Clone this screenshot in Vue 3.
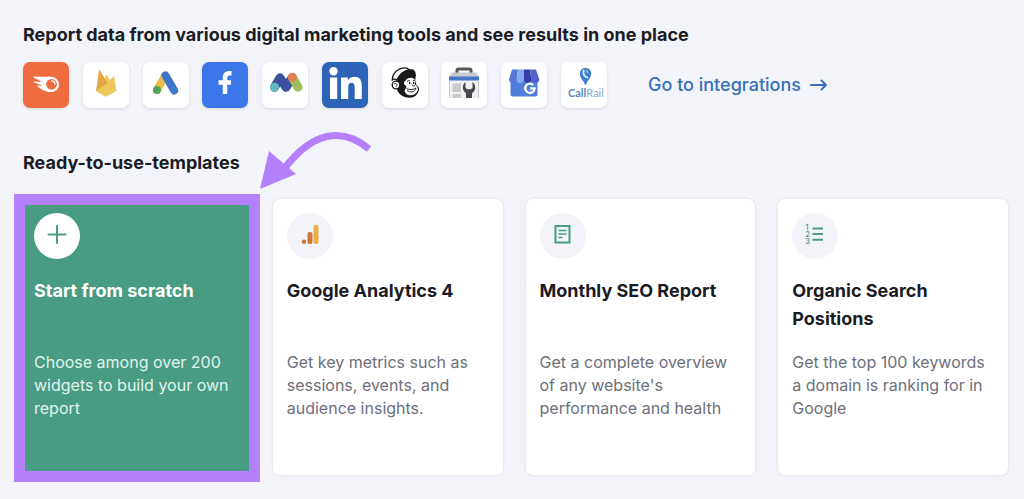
<script setup>
const templates = [
  { id: 'scratch', title: 'Start from scratch', text: 'Choose among over 200 widgets to build your own report' },
  { id: 'analytics', title: 'Google Analytics 4', text: 'Get key metrics such as sessions, events, and audience insights.' },
  { id: 'seo', title: 'Monthly SEO Report', text: "Get a complete overview of any website's performance and health" },
  { id: 'positions', title: 'Organic Search Positions', text: 'Get the top 100 keywords a domain is ranking for in Google' },
]
</script>

<template>
  <main class="page">
    <section class="integrations">
      <h2>Report data from various digital marketing tools and see results in one place</h2>
      <div class="tools">
        <ul class="tiles">
          <li class="tile semrush">
            <svg viewBox="0 0 46 46" role="img" aria-label="Semrush">
              <path fill="#fff" d="M11 14.500c5 .2 9 .4 13 .2 7-.8 12 3 12 7.700 0 4.500-3.600 7.600-8.200 7.600-5.600 0-9-2.600-13-5.300-.8-.5-.4-1.200.4-1.100l4.500.5c-2.600-1.400-5.600-2.800-8.700-3.500-.9-.3-.6-1.200.2-1.200 2.800 0 5 .3 7.500.8-2-1.800-4.700-3.100-7.700-4.200-.9-.4-.9-1.500 0-1.500z" />
              <circle cx="28.500" cy="22.300" r="5.400" fill="#ee6c3f" />
              <path fill="none" stroke="#fff" stroke-width="1.200" stroke-linecap="round" d="M28.500 18.800a3.500 3.500 0 0 1 3.500 3.500" />
            </svg>
          </li>
          <li class="tile">
            <svg viewBox="0 0 46 46" role="img" aria-label="Firebase">
              <path fill="#e9a84a" d="M13 29 16 8.500q.5-1 1.200 0l4 7.300L13 29z" />
              <path fill="#d9893e" d="m13 29 6.500-15.500 4.800 7.600z" />
              <path fill="#efc85d" d="m13 29 10-15.600q.6-.8 1.100.1L27 18l3.300-3.500q.7-.5.9.4L33.500 29 23.500 34.200q-1 .4-2 0z" />
              <path fill="#e3a447" d="m13 29 11.300-8-4.800-7.500z" />
            </svg>
          </li>
          <li class="tile">
            <svg viewBox="0 0 46 46" role="img" aria-label="Google Ads" fill="none" stroke-width="8" stroke-linecap="round">
              <path stroke="#edbd4b" d="m22 14-8 14" />
              <path stroke="#3f78ca" d="m22.500 13.500 8.700 15" />
              <circle cx="14" cy="28" r="4" fill="#4fa557" />
            </svg>
          </li>
          <li class="tile facebook">
            <svg viewBox="0 0 46 46" role="img" aria-label="Facebook">
              <path fill="none" stroke="#fff" stroke-width="4.500" d="M29.500 11.200h-2.300q-4.200 0-4.200 4.500V32M16.500 20.500H29" />
            </svg>
          </li>
          <li class="tile">
            <svg viewBox="0 0 46 46" role="img" aria-label="Matomo" fill="none" stroke-width="9" stroke-linecap="round" stroke-linejoin="round">
              <path stroke="#3d529f" d="m12.500 25.300 5.500-9.500 6 9.500 6-9.500" />
              <path stroke="#9fbe59" d="m30.500 15.500 5.500 9.700" />
              <circle cx="12.500" cy="25.300" r="4.500" fill="#62b9be" stroke="none" />
              <circle cx="30.300" cy="15.300" r="4.500" fill="#e28254" stroke="none" />
            </svg>
          </li>
          <li class="tile linkedin">
            <svg viewBox="0 0 46 46" role="img" aria-label="LinkedIn" fill="#fff">
              <circle cx="11.500" cy="9.300" r="4.200" />
              <path d="M8 15.500h7.200V37H8zM19 15.500h6.800v3c1.500-2.500 3.700-3.700 6.700-3.700 5.800 0 7.300 3.800 7.300 9.200v13h-7.100V25.800c0-3-.5-5-3-5-2.700 0-3.500 2-3.500 4.900V37H19z" />
            </svg>
          </li>
          <li class="tile">
            <svg viewBox="0 0 46 46" role="img" aria-label="Mailchimp">
              <path fill="#17181a" d="M14.500 20 17 14l14-2q3.500 0 2.500 3l-.2 4 1.300 4.500q3 1.500 2.400 4.500-1.800 7.500-9.700 7.700Q19 35.500 15.500 29z" />
              <path fill="#fff" stroke="#17181a" stroke-width="1.300" d="M10.300 18C10.500 10.500 17 4.800 25 6.200l3 2.200c-6.300-.1-10.400 3.800-13.300 9.700-1.400-1.200-2.800-1.200-4.400-.1z" />
              <path fill="#17181a" d="M16.500 18C17.500 11.500 23 6.500 30 7.300c3.300.6 4 3.800 3.800 7.200-6-2.300-12.500-.8-17.300 3.500z" />
              <path fill="#fff" d="M24 18c2.500-2.700 5.800-2.900 8.600-.8l.4 5.300c2 1.500 3.400 3.200 2.800 5.800-1.200 3.400-4.700 5.400-8.200 4.900-3.700-.6-6-3.400-4.300-6.300 1.700-1.300 1.400-2.800-.4-3.800-1.800-1.200-.8-3.500 1.100-5.100z" />
              <circle cx="14" cy="23" r="3.800" fill="#fff" stroke="#17181a" stroke-width="1.300" />
              <path fill="none" stroke="#17181a" stroke-width=".9" d="M12 22c2-1.700 3.800.3 2.400 2.600M25 19.500q1.600-1.300 3-.6M30.800 18.500h1.700M30 23l1.700 1 1.300-.5M24.500 26.500c2.500 1.500 7 1.500 9.500-.5-1 4.500-6.200 5-9 2.300" />
              <path fill="#17181a" d="M27 20h1.300v2H27zM31 20h1.200v2H31z" />
            </svg>
          </li>
          <li class="tile">
            <svg viewBox="0 0 46 46" role="img" aria-label="Google Search Console">
              <path fill="none" stroke="#555" stroke-width="3" d="M16 11V8.500q0-1.500 1.500-1.500h11q1.500 0 1.500 1.500V11" />
              <path fill="#c9cacd" d="M11 10.500h24l3 4.500H8z" />
              <path fill="#f0f0f2" d="M8 18h30v18H8z" />
              <path fill="#4777ca" d="M8 14.500h30v4H8z" />
              <path fill="#c8c9cb" d="M11.500 21.500h8.500V30h-8.500zM11.500 32h8.500v4h-8.500zM8 18.500h1V36H8zM37 18.500h1V36h-1z" />
              <path fill="#46484c" d="M24.500 20a6.800 6.800 0 0 0 .5 11.200V36h6v-4.800A6.800 6.800 0 0 0 31.500 20v5.700l-1.700 1.600h-3.600l-1.700-1.600z" />
            </svg>
          </li>
          <li class="tile">
            <svg viewBox="0 0 46 46" role="img" aria-label="Google My Business">
              <path fill="#4f7edb" d="M9.500 16h27v16.500q0 2-2 2h-23q-2 0-2-2z" />
              <path fill="#5577d5" d="M11 7.500h6l-1.500 10q-.5 3.500-3.700 3.500T8 17.500z" />
              <path fill="#85aaf0" d="M17 7.500h6v10q-.5 3.500-3.800 3.500t-3.700-3.500z" />
              <path fill="#343da7" d="M23 7.500h6l1.500 10q-.5 3.500-3.700 3.500T23 17.500z" />
              <path fill="#5262ca" d="M29 7.500h6l3.300 10q-.4 3.500-3.900 3.500t-3.900-3.500z" />
              <path fill="none" stroke="#fff" stroke-width="2.300" d="M32.200 22.900a4.700 4.700 0 1 0 1.400 3.600h-4.500" />
            </svg>
          </li>
          <li class="tile">
            <svg viewBox="0 0 46 46" role="img" aria-label="CallRail">
              <path fill="#3d7fcb" d="M24.500 5.800a5.700 5.700 0 0 0-5.700 5.700c0 4.400 3.600 6.900 5.700 11.900 2.100-5 5.700-7.500 5.700-11.900a5.700 5.700 0 0 0-5.700-5.700z" />
              <path fill="none" stroke="#e5f5ff" stroke-width="1.800" stroke-linecap="round" d="M22.800 8.500c-1 3.800.6 6.200 3.700 7" />
              <path fill="none" stroke="#e5f5ff" stroke-width="1" d="M25 8.500q2 .7 2 2.700" />
              <text x="7" y="35" class="logo-text"><tspan class="logo-bold">Call</tspan>Rail</text>
            </svg>
          </li>
        </ul>
        <a class="more" href="#integrations">
          Go to integrations
          <svg viewBox="0 0 18 16" aria-hidden="true"><path d="M1 8h15M11.500 3.500 16 8l-4.500 4.500" /></svg>
        </a>
      </div>
    </section>

    <section class="templates">
      <h2>Ready-to-use-templates</h2>
      <div class="cards">
        <a v-for="t in templates" :key="t.id" :class="['card', t.id]" :href="'#' + t.id">
          <span class="badge">
            <svg v-if="t.id === 'scratch'" viewBox="0 0 46 46" aria-hidden="true">
              <path fill="none" stroke="#489c83" stroke-width="2" stroke-linecap="round" d="M23 13v17M14.500 21.500h17" />
            </svg>
            <svg v-else-if="t.id === 'analytics'" viewBox="0 0 46 46" aria-hidden="true">
              <rect x="26.500" y="12" width="5" height="19" rx="2" fill="#e8b045" />
              <rect x="20.500" y="19" width="5" height="12" rx="2" fill="#cb7a39" />
              <circle cx="17" cy="28.700" r="2.300" fill="#cb7a39" />
            </svg>
            <svg v-else-if="t.id === 'seo'" viewBox="0 0 46 46" aria-hidden="true" fill="none" stroke="#489c83">
              <path stroke-width="2" d="M15.500 13h14v16.500h-14z" />
              <path stroke-width="1.700" d="M18.500 17.500h8M18.500 21h8M18.500 24.500h4" />
            </svg>
            <svg v-else viewBox="0 0 46 46" aria-hidden="true">
              <path fill="none" stroke="#489c83" stroke-width="2" d="M20.500 15.500H31M20.500 21H31M20.500 26.800H31" />
              <text class="digit" x="13.500" y="17">1</text>
              <text class="digit" x="13.500" y="24">2</text>
              <text class="digit" x="13.500" y="31">3</text>
            </svg>
          </span>
          <h3>{{ t.title }}</h3>
          <p>{{ t.text }}</p>
        </a>
        <svg class="pointer" viewBox="0 0 120 64" aria-hidden="true">
          <path d="M24 44C52 7 82 1 109 24" fill="none" stroke="#b580fd" stroke-width="7" />
          <path d="M9 26 0 64l36-15z" fill="#b580fd" />
        </svg>
      </div>
    </section>
  </main>
</template>

<style>
body {
  margin: 0;
  background: #f3f4f9;
}
</style>

<style scoped>
.page {
  box-sizing: border-box;
  min-height: 100vh;
  padding: 23px 16px 24px 20px;
  font-family: Inter, "Liberation Sans", sans-serif;
  font-optical-sizing: none;
  color: #1b1c23;
}
h2 {
  margin: 0 3px;
  font-size: 18px;
  line-height: 24px;
  font-weight: 700;
}
.tools {
  display: flex;
  align-items: center;
  gap: 41px;
  margin: 15px 3px 0;
}
.tiles {
  flex: 0 1 584px;
  display: flex;
  justify-content: space-between;
  margin: 0;
  padding: 0;
  list-style: none;
}
.tile {
  width: 46px;
  height: 46px;
  border-radius: 7px;
  background: #fff;
  box-shadow: 0 1px 3px #1b1c231f;
}
.tile svg,
.badge svg {
  display: block;
  width: 46px;
  height: 46px;
}
.semrush {
  background: #ee6c3f;
}
.facebook {
  background: #3b77e8;
}
.linkedin {
  background: #2e64b7;
}
.logo-text {
  font-family: Lato, sans-serif;
  font-size: 11px;
  fill: #8fa6cb;
}
.logo-bold {
  font-weight: 700;
  fill: #5c86c0;
}
.more {
  display: flex;
  align-items: center;
  gap: 9px;
  font-size: 18px;
  line-height: 24px;
  font-weight: 500;
  color: #3670b9;
  text-decoration: none;
  white-space: nowrap;
}
.more svg {
  width: 18px;
  height: 16px;
  fill: none;
  stroke: currentColor;
  stroke-width: 2;
  stroke-linecap: round;
  stroke-linejoin: round;
}
.templates {
  margin-top: 43px;
}
.cards {
  position: relative;
  display: grid;
  grid-template-columns: repeat(4, 1fr);
  gap: 23px;
  margin-top: 24px;
}
.card {
  position: relative;
  min-height: 248px;
  padding: 14px;
  border-radius: 7px;
  background: #fff;
  box-shadow: 0 0 3px #1b1c231f;
  color: inherit;
  text-decoration: none;
}
.badge {
  display: block;
  width: 46px;
  height: 46px;
  border-radius: 50%;
  background: #f3f4f9;
}
h3 {
  min-height: 56px;
  margin: 18px 0 0;
  font-size: 18px;
  line-height: 28px;
  font-weight: 700;
}
p {
  margin: 18px 0 0;
  font-size: 16px;
  line-height: 23px;
  color: #6d6f7a;
}
.scratch {
  background: #489c83;
  color: #fff;
}
.scratch::after {
  content: "";
  position: absolute;
  inset: -5px -10px -7px -6px;
  border: 11px solid #b580fd;
}
.scratch .badge {
  background: #fff;
}
.scratch p {
  color: #e2f3ed;
}
.digit {
  font-size: 7px;
  font-weight: 600;
  fill: #489c83;
}
.pointer {
  position: absolute;
  left: 240px;
  top: -74px;
  width: 120px;
  height: 64px;
  overflow: visible;
}
</style>
